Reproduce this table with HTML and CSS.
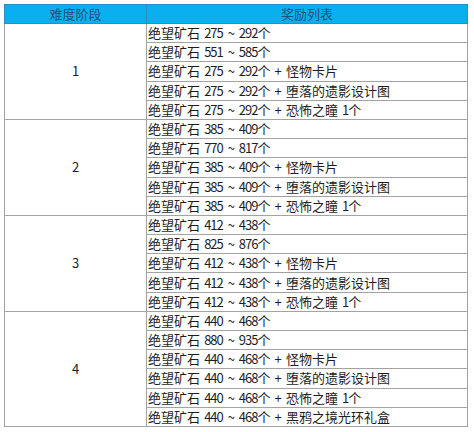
FILE: index.html
```html
<!DOCTYPE html>
<html lang="zh">
<head>
<meta charset="utf-8">
<link rel="stylesheet" href="styles.css">
</head>
<body>
<div class="wrap">
<table class="rewards">
  <colgroup><col class="c1"><col class="c2"></colgroup>
  <thead>
    <tr class="head"><th>难度阶段</th><th>奖励列表</th></tr>
  </thead>
  <tbody>
    <tr><td class="lvl" rowspan="5">1</td><td>绝望矿石 <span class="n">275 ~ 292</span>个</td></tr>
    <tr><td>绝望矿石 <span class="n">551 ~ 585</span>个</td></tr>
    <tr><td>绝望矿石 <span class="n">275 ~ 292</span>个 + 怪物卡片</td></tr>
    <tr><td>绝望矿石 <span class="n">275 ~ 292</span>个 + 堕落的遗影设计图</td></tr>
    <tr><td>绝望矿石 <span class="n">275 ~ 292</span>个 + 恐怖之瞳 <span class="n">1</span>个</td></tr>

    <tr><td class="lvl" rowspan="5">2</td><td>绝望矿石 <span class="n">385 ~ 409</span>个</td></tr>
    <tr><td>绝望矿石 <span class="n">770 ~ 817</span>个</td></tr>
    <tr><td>绝望矿石 <span class="n">385 ~ 409</span>个 + 怪物卡片</td></tr>
    <tr><td>绝望矿石 <span class="n">385 ~ 409</span>个 + 堕落的遗影设计图</td></tr>
    <tr><td>绝望矿石 <span class="n">385 ~ 409</span>个 + 恐怖之瞳 <span class="n">1</span>个</td></tr>

    <tr><td class="lvl" rowspan="5">3</td><td>绝望矿石 <span class="n">412 ~ 438</span>个</td></tr>
    <tr><td>绝望矿石 <span class="n">825 ~ 876</span>个</td></tr>
    <tr><td>绝望矿石 <span class="n">412 ~ 438</span>个 + 怪物卡片</td></tr>
    <tr><td>绝望矿石 <span class="n">412 ~ 438</span>个 + 堕落的遗影设计图</td></tr>
    <tr><td>绝望矿石 <span class="n">412 ~ 438</span>个 + 恐怖之瞳 <span class="n">1</span>个</td></tr>

    <tr><td class="lvl" rowspan="6">4</td><td>绝望矿石 <span class="n">440 ~ 468</span>个</td></tr>
    <tr><td>绝望矿石 <span class="n">880 ~ 935</span>个</td></tr>
    <tr><td>绝望矿石 <span class="n">440 ~ 468</span>个 + 怪物卡片</td></tr>
    <tr><td>绝望矿石 <span class="n">440 ~ 468</span>个 + 堕落的遗影设计图</td></tr>
    <tr><td>绝望矿石 <span class="n">440 ~ 468</span>个 + 恐怖之瞳 <span class="n">1</span>个</td></tr>
    <tr><td>绝望矿石 <span class="n">440 ~ 468</span>个 + 黑鸦之境光环礼盒</td></tr>
  </tbody>
</table>
</div>
</body>
</html>
```

FILE: styles.css
```css
html, body {
  margin: 0;
  padding: 0;
  background: #ffffff;
}
.wrap {
  padding: 4px 0 0 4px;
}
.rewards {
  width: 464px;
  border-collapse: collapse;
  table-layout: fixed;
  font-family: "Noto Sans CJK SC", "Noto Sans", sans-serif;
  font-size: 13px;
  color: #1e1e1e;
}
.c1 { width: 142px; }
.rewards th {
  background: #0aaff0;
  color: #24507a;
  font-weight: normal;
  height: 18px;
  padding: 0;
  line-height: 18px;
  text-align: center;
  border: 1px solid #2a8fc0;
}
.rewards td {
  height: 18.2px;
  padding: 0 0 0 1px;
  line-height: 18px;
  border: 1px solid #a3a3a3;
  white-space: nowrap;
  word-spacing: 1.2px;
}
.rewards .n {
  letter-spacing: -1px;
  word-spacing: 3px;
}
.rewards td.lvl {
  text-align: center;
  padding: 0;
  font-size: 13px;
}
```
